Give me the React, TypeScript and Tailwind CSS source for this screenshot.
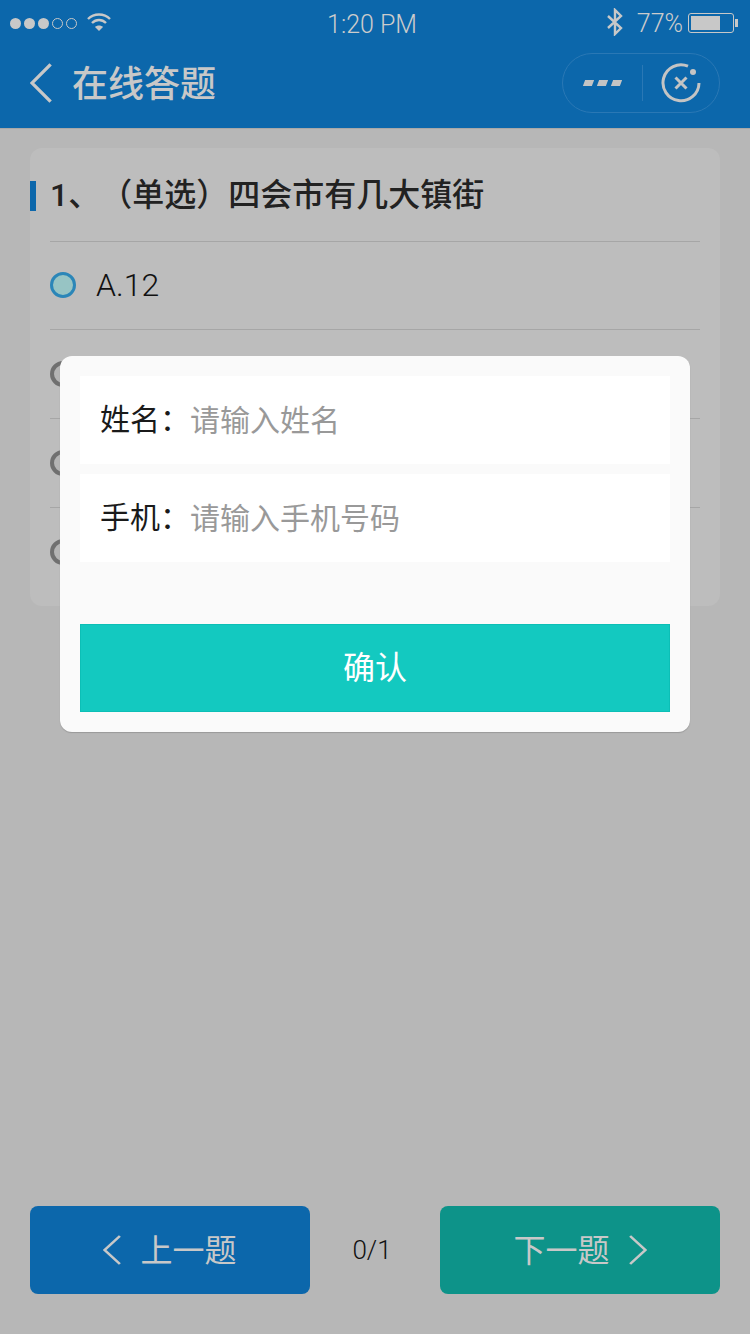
const font = { fontFamily: '"Roboto", "Noto Sans CJK SC", sans-serif' };

function Chevron({ dir, className }: { dir: 'left' | 'right'; className: string }) {
  return (
    <svg viewBox="0 0 16 30" className={className} fill="none" stroke="#c8c8c8" strokeWidth="2.4" preserveAspectRatio="none">
      <path d={dir === 'left' ? 'M15 1 1.5 15 15 29' : 'M1 1 14.5 15 1 29'} />
    </svg>
  );
}

function StatusBar() {
  return (
    <div className="relative flex h-[46px] items-center pl-[10px] pr-[12px] text-[#cccccc]">
      <div className="flex items-center gap-[3px]">
        {[0, 1, 2].map(i => (
          <span key={i} className="h-[11px] w-[11px] rounded-full bg-[#c8c8c8]" />
        ))}
        {[0, 1].map(i => (
          <span key={i} className="h-[11px] w-[11px] rounded-full border border-[#c8c8c8]" />
        ))}
      </div>
      <svg viewBox="0 0 24 20" className="ml-[10px] mb-[2px] h-[20px] w-[24px]" fill="none" stroke="#c8c8c8" strokeWidth="2.4">
        <path d="M1 7c6-6 16-6 22 0" />
        <path d="M5 11c4-4 10-4 14 0" />
        <path d="M12 19l-4-4c2-2 6-2 8 0z" fill="#c8c8c8" stroke="none" />
      </svg>
      <span className="absolute left-0 right-[6px] top-[8px] text-center text-[25px] leading-[34px] font-light">1:20 PM</span>
      <div className="ml-auto flex items-center">
        <svg viewBox="0 0 16 28" className="mb-[2px] h-[28px] w-[16px]" fill="none" stroke="#c8c8c8" strokeWidth="2.4">
          <path d="M1 8l13 12-6 6V2l6 6L1 20" />
        </svg>
        <span className="ml-[14px] mt-[1px] text-[25px] leading-[34px] font-light">77%</span>
        <div className="ml-[5px] flex items-center">
          <div className="h-[20px] w-[46px] rounded-[3px] border border-[#c8c8c8] p-[2px]">
            <div className="h-full w-[72%] bg-[#c8c8c8]" />
          </div>
          <span className="ml-[1px] h-[8px] w-[3px] bg-[#c8c8c8]" />
        </div>
      </div>
    </div>
  );
}

function Toolbar() {
  return (
    <div className="flex flex-1 items-center pb-[9px] pl-[30px] pr-[30px]">
      <Chevron dir="left" className="h-[40px] w-[22px]" />
      <span className="ml-[20px] mt-[5px] text-[36px] font-medium leading-[44px] text-[#c8c8c8]">在线答题</span>
      <div className="ml-auto flex h-[60px] w-[158px] items-center rounded-full border border-[#2a78b5]">
        <div className="ml-[21px] flex w-[38px] gap-[5px]">
          {[0, 1, 2].map(i => (
            <span key={i} className="h-[6px] w-[9px] -skew-x-[20deg] bg-[#c4c4c4]" />
          ))}
        </div>
        <span className="ml-[20px] h-[36px] w-[1px] bg-[#2a78b5]" />
        <svg viewBox="0 0 40 40" className="ml-[18px] h-[40px] w-[40px]" fill="none" stroke="#c4c4c4">
          <path d="M27 3.2A18 18 0 1 0 38 20" strokeWidth="3" />
          <circle cx="32" cy="9" r="3" fill="#c4c4c4" stroke="none" />
          <path d="M14.5 14.5l11 11M25.5 14.5l-11 11" strokeWidth="3" />
        </svg>
      </div>
    </div>
  );
}

function Option({ label }: { label?: string }) {
  return (
    <div className={`flex items-center border-t border-[#a6a6a6] ${label ? 'h-[88px] pb-[2px]' : 'h-[89px]'}`}>
      <span className={`h-[26px] w-[26px] rounded-full ${label ? 'border-[3px] border-[#2b86b8] bg-[#97c4c4]' : 'border-[4px] border-[#707070] bg-[#b4b4b4]'}`} />
      {label && <span className="ml-[20px] text-[32px] font-light leading-[40px] text-[#111]">{label}</span>}
    </div>
  );
}

function Field({ label, placeholder }: { label: string; placeholder: string }) {
  return (
    <div className="flex h-[88px] items-center bg-white pl-[20px]">
      <span className="w-[91px] text-[30px] leading-[40px] text-[#1a1a1a] [text-spacing-trim:space-all]">{label}：</span>
      <input
        placeholder={placeholder}
        className="-ml-[1px] mt-[2px] min-w-0 flex-1 text-[30px] leading-[40px] outline-none placeholder:text-[#999]"
      />
    </div>
  );
}

export default function App() {
  return (
    <div className="relative flex h-[1334px] w-[750px] flex-col overflow-hidden bg-[#b7b7b7]" style={font}>
      <div className="flex h-[129px] flex-col border-b border-[#a8a8a8] bg-[#0c67ab]">
        <StatusBar />
        <Toolbar />
      </div>

      <div className="relative mx-[30px] mt-[19px] h-[458px] rounded-[12px] bg-[#bdbdbd] px-[20px]">
        <span className="absolute left-0 top-[33px] h-[30px] w-[6px] bg-[#0c67ab]" />
        <div className="flex h-[93px] items-center text-[32px] font-medium leading-[40px] text-[#222] [text-spacing-trim:space-all]">
          1、（单选）四会市有几大镇街
        </div>
        <Option label="A.12" />
        <Option />
        <Option />
        <Option />
      </div>

      <div className="mt-auto mb-[40px] flex items-center justify-between px-[30px]">
        <button className="flex h-[88px] w-[280px] items-center justify-center rounded-[8px] bg-[#0c67ab] text-[32px] text-[#c8c8c8]">
          <Chevron dir="left" className="h-[30px] w-[18px]" />
          <span className="ml-[19px] mt-[1px]">上一题</span>
        </button>
        <span className="mr-[6px] text-[26px] font-light text-[#111]">0/1</span>
        <button className="flex h-[88px] w-[280px] items-center justify-center rounded-[8px] bg-[#0d9389] text-[32px] text-[#c8c8c8]">
          <span className="mr-[19px] mt-[1px]">下一题</span>
          <Chevron dir="right" className="h-[30px] w-[18px]" />
        </button>
      </div>

      <div className="absolute left-[60px] top-[356px] flex h-[376px] w-[630px] flex-col gap-[10px] rounded-[12px] bg-[#fafafa] p-[20px] shadow-[0_1px_1px_#999]">
        <Field label="姓名" placeholder="请输入姓名" />
        <Field label="手机" placeholder="请输入手机号码" />
        <button className="mt-auto h-[88px] border border-[#0cbfb6] bg-[#13c9c0] text-[32px] text-white">确认</button>
      </div>
    </div>
  );
}
